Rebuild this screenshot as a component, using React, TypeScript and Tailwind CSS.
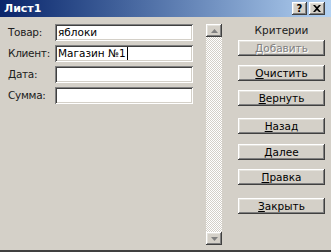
import React from 'react';

const raised =
  'shadow-[inset_-1px_-1px_#404040,inset_1px_1px_#ffffff,inset_-2px_-2px_#808080,inset_2px_2px_#e4e2dc]';
const sunken =
  'shadow-[inset_1px_1px_#808080,inset_-1px_-1px_#ffffff,inset_2px_2px_#404040,inset_-2px_-2px_#d4d0c8]';

function Field({ label, value, caret }: { label: string; value?: string; caret?: boolean }) {
  return (
    <div className="flex items-center h-[17px]">
      <span className="w-[47px] text-[#202020] tracking-[-0.3px]">{label}</span>
      <div className={`w-[138px] h-[17px] bg-white flex items-center pl-[3px] ${sunken}`}>
        <span className="text-black leading-none">{value}</span>
        {caret && <span className="w-px h-[13px] bg-black ml-[1px]" />}
      </div>
    </div>
  );
}

function Btn({ label, disabled, className = '' }: { label: string; disabled?: boolean; className?: string }) {
  return (
    <div className={`w-[87px] h-[16px] flex items-center justify-center bg-[#d4d0c8] ${raised} ${className}`}>
      {disabled ? (
        <span className="text-[#808080] [text-shadow:1px_1px_#ffffff]">{label}</span>
      ) : (
        <span className="text-black">
          <span className="underline underline-offset-1">{label.slice(0, 1)}</span>
          {label.slice(1)}
        </span>
      )}
    </div>
  );
}

export default function App() {
  return (
    <div
      className="w-[331px] h-[252px] flex flex-col bg-[#d4d0c8] text-[10.5px] leading-none overflow-hidden border-b-2 border-[#404040]"
      style={{ fontFamily: '"DejaVu Sans", "Liberation Sans", sans-serif' }}
    >
      {/* заголовок окна */}
      <div className="h-[17px] flex items-center justify-between pl-[4px] pr-[6px] bg-gradient-to-r from-[#0a246a] to-[#b4d2f2]">
        <span className="text-white font-bold text-[11px]">Лист1</span>
        <div className="flex gap-[2px]">
          <div className={`w-[15px] h-[13px] bg-[#d4d0c8] flex items-center justify-center font-bold text-[10px] ${raised}`}>?</div>
          <div className={`w-[16px] h-[13px] bg-[#d4d0c8] flex items-center justify-center ${raised}`}>
            <svg width="8" height="7" viewBox="0 0 8 7">
              <path d="M0 0h2l2 2 2-2h2L5 3.5 8 7H6L4 5 2 7H0l3-3.5z" fill="#000" />
            </svg>
          </div>
        </div>
      </div>

      <div className="flex-1 flex">
        {/* поля */}
        <div className="w-[206px] pl-[8px] pt-[7px] flex flex-col gap-[4px]">
          <Field label="Товар:" value="яблоки" />
          <Field label="Клиент:" value="Магазин №1" caret />
          <Field label="Дата:" />
          <Field label="Сумма:" />
        </div>

        {/* полоса прокрутки */}
        <div className="w-[16px] mt-[7px] mb-[5px] flex flex-col bg-[repeating-conic-gradient(#ffffff_0%_25%,#d4d0c8_0%_50%)] bg-[length:2px_2px]">
          <div className={`h-[13px] bg-[#d4d0c8] flex items-center justify-center ${raised}`}>
            <svg width="7" height="4" viewBox="0 0 7 4">
              <path d="M3.5 0L7 4H0z" fill="#808080" />
            </svg>
          </div>
          <div className="flex-1" />
          <div className={`h-[13px] bg-[#d4d0c8] flex items-center justify-center ${raised}`}>
            <svg width="7" height="4" viewBox="0 0 7 4">
              <path d="M0 0h7L3.5 4z" fill="#808080" />
            </svg>
          </div>
        </div>

        {/* кнопки */}
        <div className="ml-[16px] flex flex-col items-center pt-[8px]">
          <span className="text-[#202020] h-[11px]">Критерии</span>
          <Btn label="Добавить" disabled className="mt-[4px]" />
          <Btn label="Очистить" className="mt-[9px]" />
          <Btn label="Вернуть" className="mt-[9px]" />
          <Btn label="Назад" className="mt-[12px]" />
          <Btn label="Далее" className="mt-[10px]" />
          <Btn label="Правка" className="mt-[9px]" />
          <Btn label="Закрыть" className="mt-[13px]" />
        </div>
      </div>
    </div>
  );
}
